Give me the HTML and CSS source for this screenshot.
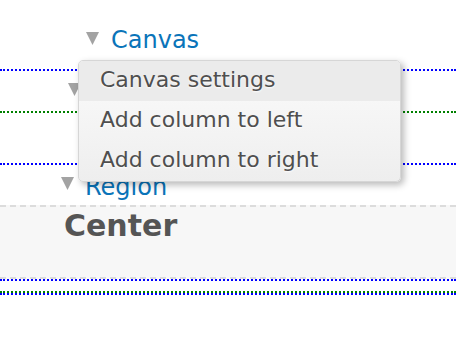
FILE: index.html
```html
<!DOCTYPE html>
<html lang="en">
<head>
    <meta charset="UTF-8">
    <meta name="viewport" content="width=device-width, initial-scale=1.0">
    <title>Layout editor</title>
    <link rel="stylesheet" href="styles.css">
</head>
<body>
    <div class="canvas">
        <div class="title title-canvas">
            <svg class="toggle" width="13" height="14" viewBox="0 0 13 14"><path d="M0 1 L13 1 L6.5 14 Z" fill="#a3a3a3"/></svg>
            <span class="label">Canvas</span>
        </div>

        <div class="column">
            <!-- column title sits under the menu -->
            <div class="title title-column">
                <svg class="toggle" width="13" height="14" viewBox="0 0 13 14"><path d="M0 1 L13 1 L6.5 14 Z" fill="#a3a3a3"/></svg>
            </div>

            <div class="row">
                <div class="title title-row"></div>

                <div class="column">
                    <div class="title title-region">
                        <svg class="toggle" width="13" height="14" viewBox="0 0 13 14"><path d="M0 1 L13 1 L6.5 14 Z" fill="#a3a3a3"/></svg>
                        <span class="label">Region</span>
                    </div>
                    <div class="region">
                        <h2>Center</h2>
                    </div>
                </div>
            </div>
        </div>

        <!-- context menu for the canvas -->
        <ul class="menu">
            <li class="menu-item active">Canvas settings</li>
            <li class="menu-item">Add column to left</li>
            <li class="menu-item">Add column to right</li>
        </ul>
    </div>
</body>
</html>
```

FILE: styles.css
```css
body {
    margin: 0;
    font-family: "DejaVu Sans", sans-serif;
    background: white;
}

.canvas {
    position: relative;
}

.title {
    display: flex;
    align-items: center;
    height: 40px;
}

.toggle {
    flex: none;
    margin-bottom: 4px;
}

.label {
    font-size: 24px;
    line-height: 28px;
    color: #0a74b9;
    margin-left: 11px;
}

.title-canvas {
    align-items: flex-start;
    height: 43px;
    padding: 26px 0 0 86px;
}

.title-canvas .toggle {
    margin-top: 5px;
}

.title-canvas .label {
    margin-left: 12px;
}

.title-column {
    padding-left: 68px;
}

.title-row {
    height: 50px;
}

.title-region {
    padding-left: 61px;
}

.title-region .label {
    margin-top: 4px;
}

.column {
    border-top: 2px dotted #0000ff;
    border-bottom: 2px dotted #0000ff;
}

.row {
    border-top: 2px dotted #008000;
    border-bottom: 2px dotted #008000;
    padding-bottom: 10px;
}

.region {
    background: #f7f7f7;
    border-top: 2px dashed #dcdcdc;
    border-bottom: 2px dashed #dcdcdc;
    padding: 1px 0 33px 64px;
}

.region h2 {
    margin: 0;
    font-size: 30px;
    line-height: 36px;
    font-weight: bold;
    color: #555;
}

.menu {
    position: absolute;
    left: 78px;
    top: 60px;
    width: 321px;
    margin: 0;
    padding: 0;
    list-style: none;
    border: 1px solid #d6d6d6;
    border-radius: 5px;
    background: linear-gradient(#fbfbfb, #eeeeee);
    box-shadow: 3px 3px 7px rgba(0, 0, 0, 0.28);
    overflow: hidden;
}

.menu-item {
    height: 40px;
    padding-left: 21px;
    font-size: 22px;
    line-height: 38px;
    color: #4f4f4f;
    text-shadow: 0 1px 2px #fff;
}

.menu-item.active {
    background: #ebebeb;
}
```
